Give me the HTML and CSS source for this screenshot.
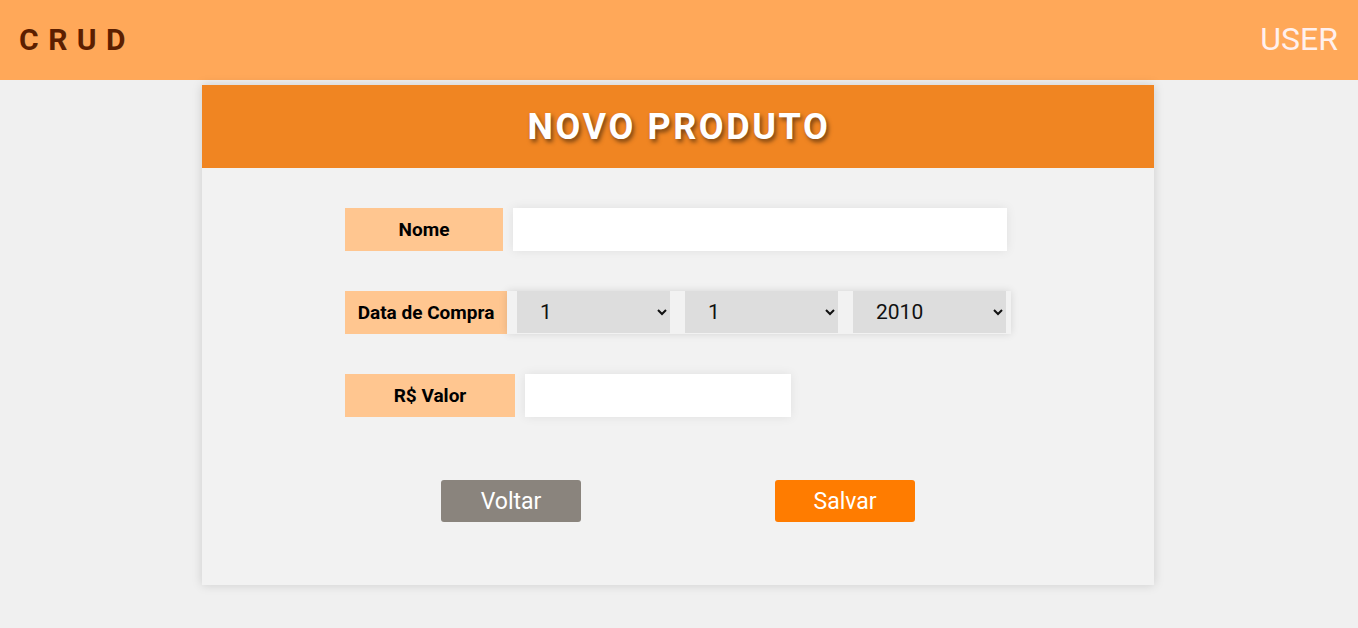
FILE: index.html
```html
<!DOCTYPE html>
<html lang="pt-BR">
<head>
<meta charset="utf-8">
<title>CRUD - Novo Produto</title>
<link rel="stylesheet" href="styles.css">
</head>
<body>
<header class="topbar">
  <div class="brand">CRUD</div>
  <div class="user">USER</div>
</header>
<main class="page">
  <section class="card">
    <div class="card-head"><h1>NOVO PRODUTO</h1></div>
    <form class="form">
      <div class="row">
        <label class="lbl lbl-nome">Nome</label>
        <input class="field field-nome" type="text">
      </div>
      <div class="row">
        <label class="lbl lbl-data">Data de Compra</label>
        <div class="selects">
          <select class="sel"><option>1</option></select>
          <select class="sel"><option>1</option></select>
          <select class="sel"><option>2010</option></select>
        </div>
      </div>
      <div class="row">
        <label class="lbl lbl-valor">R$ Valor</label>
        <input class="field field-valor" type="text">
      </div>
      <div class="actions">
        <button type="button" class="btn btn-back">Voltar</button>
        <button type="button" class="btn btn-save">Salvar</button>
      </div>
    </form>
  </section>
</main>
</body>
</html>
```
FILE: styles.css
```css
* { box-sizing: border-box; }
html, body { margin: 0; padding: 0; }
body {
  background: #f0f0f0;
  font-family: Roboto, "Liberation Sans", sans-serif;
  height: 628px;
  overflow: hidden;
}
.topbar {
  height: 80px;
  background: #ffa859;
  display: flex;
  align-items: center;
  justify-content: space-between;
  padding: 0 20px 0 19px;
}
.brand {
  font-weight: 700;
  font-size: 30px;
  letter-spacing: 9.5px;
  color: #5c1f00;
  padding-bottom: 1px;
}
.user {
  font-size: 32px;
  color: #fff0ee;
  padding-bottom: 2px;
}
.page {
  display: flex;
  justify-content: center;
  padding: 5px 2px 0 0;
}
.card {
  width: 952px;
  background: #f2f2f2;
  box-shadow: 0 0 10px rgba(0,0,0,0.15);
}
.card-head {
  height: 83px;
  background: #f08522;
  display: flex;
  align-items: center;
  justify-content: center;
}
.card-head h1 {
  margin: 0;
  color: #fff;
  font-size: 36px;
  font-weight: 700;
  letter-spacing: 2.6px;
  text-shadow: 2px 3px 4px rgba(0,0,0,0.5);
  padding: 0 0 0 2px;
}
.form {
  width: 666px;
  margin: 0 auto;
  padding: 40px 0 63px;
  display: flex;
  flex-direction: column;
  gap: 40px;
}
.row {
  display: flex;
  align-items: stretch;
  height: 43px;
}
.lbl {
  background: #ffc690;
  display: flex;
  align-items: center;
  justify-content: center;
  font-weight: 700;
  font-size: 19px;
  color: #000;
}
.lbl-nome { width: 158px; }
.lbl-data { width: 162px; }
.lbl-valor { width: 170px; }
.field {
  border: none;
  background: #fff;
  margin-left: 10px;
  box-shadow: 0 0 10px rgba(0,0,0,0.08);
  outline: none;
  font-size: 18px;
  font-family: inherit;
}
.field-nome { width: 494px; }
.field-valor { width: 266px; }
.selects {
  display: flex;
  gap: 15px;
  padding: 0 5px 0 10px;
  background: #f2f2f2;
  box-shadow: 0 0 8px rgba(0,0,0,0.12);
  height: 43px;
}
.sel {
  width: 153px;
  height: 42px;
  border: none;
  border-radius: 0;
  background-color: #dddddd;
  font-family: inherit;
  font-size: 21px;
  color: #111;
  padding-left: 19px;
}
.actions {
  margin-top: 23px;
  display: flex;
  justify-content: center;
  gap: 194px;
}
.btn {
  width: 140px;
  height: 42px;
  border: none;
  border-radius: 3px;
  color: #fff;
  font-family: inherit;
  font-size: 23px;
}
.btn-back { background: #8a847d; }
.btn-save { background: #ff7c00; }
```
